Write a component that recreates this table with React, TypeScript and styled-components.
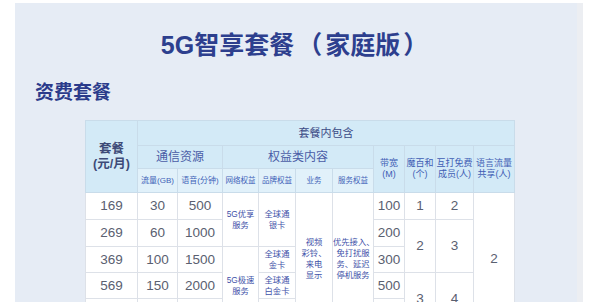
import React from "react";
import styled, { createGlobalStyle } from "styled-components";

const Global = createGlobalStyle`
  html, body { margin: 0; padding: 0; background: #ffffff; }
  body { font-family: "Liberation Sans", "Noto Sans CJK SC", sans-serif; }
`;

const Page = styled.div`
  width: 600px;
  height: 302px;
  overflow: hidden;
  padding: 3px 0 0 15px;
  box-sizing: border-box;
  background: #ffffff;
`;

const Panel = styled.div`
  width: 568px;
  height: 330px;
  box-sizing: border-box;
  background: #e6ecf5;
  border-right: 6px solid #eceef2;
  padding: 26px 0 0 20px;
  display: flex;
  flex-direction: column;
`;

const Title = styled.h1`
  margin: 0 0 0 -20px;
  font-family: "Liberation Sans", "Noto Sans CJK SC", sans-serif;
  font-size: 25px;
  line-height: 32px;
  font-weight: 700;
  color: #2d3f8e;
  text-align: center;
`;

const Paren = styled.span`
  margin: 0 3px;
`;

const Subtitle = styled.h2`
  margin: 18px 0 0 0;
  font-family: "Noto Sans CJK SC", sans-serif;
  font-size: 19px;
  line-height: 24px;
  font-weight: 700;
  color: #2b3b8b;
`;

const Table = styled.table`
  margin: 17px 0 0 50px;
  width: 429px;
  table-layout: fixed;
  border-collapse: collapse;
  border: 1px solid #a9b3c5;
  font-family: "Liberation Sans", "Noto Sans CJK SC", sans-serif;
  text-align: center;
`;

const HeadCell = styled.th<{ $tone?: "light"; $size?: number; $color?: string; $weight?: number }>`
  padding: 0;
  border: 1px solid #c9dcea;
  background: ${(p) => (p.$tone === "light" ? "#e1f1fa" : "#d3eaf7")};
  font-size: ${(p) => p.$size ?? 12}px;
  line-height: ${(p) => Math.round((p.$size ?? 12) * 1.2)}px;
  font-weight: ${(p) => p.$weight ?? 400};
  color: ${(p) => p.$color ?? "#3b4a86"};
  white-space: pre;
  overflow: visible;
`;

const Cell = styled.td<{ $small?: boolean }>`
  padding: 0;
  border: 1px solid #dde1e8;
  background: #ffffff;
  font-size: ${(p) => (p.$small ? 8.3 : 13.5)}px;
  line-height: ${(p) => (p.$small ? 11 : 16)}px;
  color: ${(p) => (p.$small ? "#3e51a8" : "#5a6070")};
  white-space: pre;
  overflow: visible;
`;

const Row = styled.tr<{ $h: number }>`
  height: ${(p) => p.$h}px;
`;

const widths = [52, 40, 45, 36, 37, 37, 41, 31, 31, 38, 41];

export default function App() {
  return (
    <>
      <Global />
      <Page>
        <Panel>
          <Title>
            5G智享套餐<Paren>（</Paren>家庭版<Paren>）</Paren>
          </Title>
          <Subtitle>资费套餐</Subtitle>
          <Table>
            <colgroup>
              {widths.map((w, i) => (
                <col key={i} style={{ width: w }} />
              ))}
            </colgroup>
            <thead>
              <Row $h={25}>
                <HeadCell rowSpan={3} $size={12.5} $weight={700} $color="#3d4a78">
                  {"套餐\n(元/月)"}
                </HeadCell>
                <HeadCell colSpan={10} $size={11}>
                  套餐内包含
                </HeadCell>
              </Row>
              <Row $h={23}>
                <HeadCell colSpan={2} $size={12} $color="#4a5ca6">
                  通信资源
                </HeadCell>
                <HeadCell colSpan={4} $size={12} $color="#4a5ca6">
                  权益类内容
                </HeadCell>
                <HeadCell rowSpan={2} $size={9} $color="#3f5db4">
                  {"带宽\n(M)"}
                </HeadCell>
                <HeadCell rowSpan={2} $size={9} $color="#3f5db4">
                  {"魔百和\n(个)"}
                </HeadCell>
                <HeadCell rowSpan={2} $size={9} $color="#3f5db4">
                  {"互打免费\n成员(人)"}
                </HeadCell>
                <HeadCell rowSpan={2} $size={9} $color="#3f5db4">
                  {"语言流量\n共享(人)"}
                </HeadCell>
              </Row>
              <Row $h={24}>
                <HeadCell $tone="light" $size={8} $color="#3f62b8">流量(GB)</HeadCell>
                <HeadCell $tone="light" $size={8} $color="#3f62b8">语音(分钟)</HeadCell>
                <HeadCell $tone="light" $size={7.5} $color="#3f62b8">网络权益</HeadCell>
                <HeadCell $tone="light" $size={7.5} $color="#3f62b8">品牌权益</HeadCell>
                <HeadCell $tone="light" $size={7.5} $color="#3f62b8">业务</HeadCell>
                <HeadCell $tone="light" $size={7.5} $color="#3f62b8">服务权益</HeadCell>
              </Row>
            </thead>
            <tbody>
              <Row $h={27}>
                <Cell>169</Cell>
                <Cell>30</Cell>
                <Cell>500</Cell>
                <Cell rowSpan={2} $small>{"5G优享\n服务"}</Cell>
                <Cell rowSpan={2} $small>{"全球通\n银卡"}</Cell>
                <Cell rowSpan={5} $small>{"视频\n彩铃、\n来电\n显示"}</Cell>
                <Cell rowSpan={5} $small>{"优先接入、\n免打扰服\n务、延迟\n停机服务"}</Cell>
                <Cell>100</Cell>
                <Cell>1</Cell>
                <Cell>2</Cell>
                <Cell rowSpan={5}>2</Cell>
              </Row>
              <Row $h={27}>
                <Cell>269</Cell>
                <Cell>60</Cell>
                <Cell>1000</Cell>
                <Cell>200</Cell>
                <Cell rowSpan={2}>2</Cell>
                <Cell rowSpan={2}>3</Cell>
              </Row>
              <Row $h={26}>
                <Cell>369</Cell>
                <Cell>100</Cell>
                <Cell>1500</Cell>
                <Cell rowSpan={3} $small>{"5G极速\n服务"}</Cell>
                <Cell $small>{"全球通\n金卡"}</Cell>
                <Cell>300</Cell>
              </Row>
              <Row $h={26}>
                <Cell>569</Cell>
                <Cell>150</Cell>
                <Cell>2000</Cell>
                <Cell $small>{"全球通\n白金卡"}</Cell>
                <Cell>500</Cell>
                <Cell rowSpan={2}>3</Cell>
                <Cell rowSpan={2}>4</Cell>
              </Row>
              <Row $h={27}>
                <Cell />
                <Cell />
                <Cell />
                <Cell />
                <Cell />
              </Row>
            </tbody>
          </Table>
        </Panel>
      </Page>
    </>
  );
}
